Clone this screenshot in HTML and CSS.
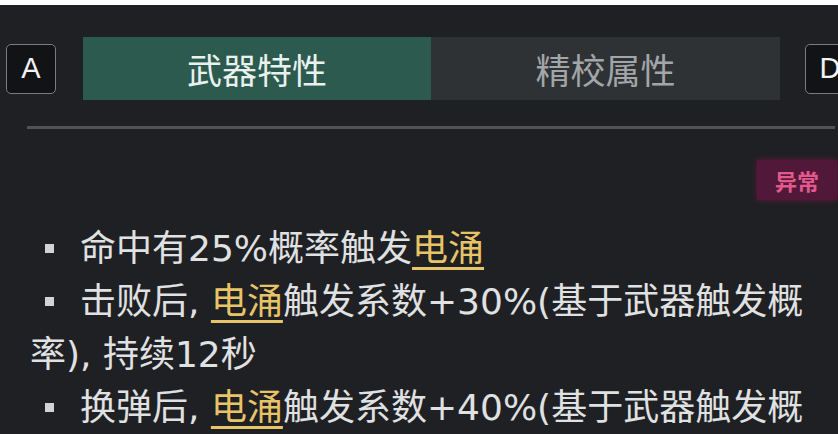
FILE: index.html
```html
<!DOCTYPE html>
<html lang="zh-CN">
<head>
    <meta charset="UTF-8">
    <meta name="viewport" content="width=device-width, initial-scale=1.0">
    <title>武器特性</title>
    <link rel="stylesheet" href="styles.css">
</head>
<body>
    <div class="panel">
        <div class="tab-row">
            <div class="key">A</div>
            <div class="tabs">
                <div class="tab active">武器特性</div>
                <div class="tab">精校属性</div>
            </div>
            <div class="key">D</div>
        </div>
        <div class="divider"></div>
        <div class="badge-row">
            <span class="badge">异常</span>
        </div>
        <div class="traits">
            <p class="trait"><span class="dot"></span>命中有25%概率触发<span class="link">电涌</span></p>
            <p class="trait"><span class="dot"></span>击败后, <span class="link">电涌</span>触发系数+30%(基于武器触发概率), 持续12秒</p>
            <p class="trait"><span class="dot"></span>换弹后, <span class="link">电涌</span>触发系数+40%(基于武器触发概率), 持续12秒</p>
        </div>
    </div>
</body>
</html>
```

FILE: styles.css
```css
body {
    margin: 0;
    padding: 0;
    background-color: #ffffff;
    font-family: "Noto Sans CJK SC", "Noto Sans", sans-serif;
    overflow: hidden;
}
.panel {
    margin-top: 5px;
    height: 429px;
    background-color: #1f2023;
    overflow: hidden;
}
.tab-row {
    display: flex;
    align-items: center;
    padding: 32px 0 0 6px;
    width: 900px;
}
.key {
    flex: none;
    width: 48px;
    height: 48px;
    border: 1px solid #7a7c7f;
    border-radius: 5px;
    background-color: #121315;
    color: #f2f2f2;
    font-family: "Liberation Sans", Arial, sans-serif;
    font-size: 29px;
    display: flex;
    align-items: center;
    justify-content: center;
}
.tabs {
    display: flex;
    margin: 0 25px 0 27px;
}
.tab {
    width: 348px;
    height: 63px;
    display: flex;
    align-items: center;
    justify-content: center;
    font-size: 35px;
    color: #a3a6a8;
    background-color: #2f3235;
}
.tab.active {
    background-color: #2d5a4f;
    color: #e9f1ee;
}
.tab + .tab {
    width: 349px;
}
.divider {
    height: 3px;
    margin: 26px 3px 0 27px;
    background-color: #505255;
}
.badge-row {
    display: flex;
    justify-content: flex-end;
    padding: 31px 1px 0 0;
}
.badge {
    width: 80px;
    height: 40px;
    display: flex;
    align-items: center;
    justify-content: center;
    font-size: 22px;
    font-weight: bold;
    color: #e3598c;
    background-color: #511839;
    box-shadow: 0 0 6px rgba(130, 20, 75, 0.7);
}
.traits {
    padding: 22px 0 0 30px;
    width: 786px;
}
.trait {
    margin: 0;
    font-family: "DejaVu Sans", "Noto Sans CJK SC", sans-serif;
    font-size: 36px;
    line-height: 53px;
    color: #e0e1e2;
}
.dot {
    display: inline-block;
    width: 9px;
    height: 9px;
    background-color: #d2d3d5;
    margin: 0 26px 0 15px;
    vertical-align: middle;
    position: relative;
    top: -3px;
}
.link {
    color: #e8c468;
    text-decoration: underline;
    text-decoration-thickness: 3px;
    text-underline-offset: 6px;
}
```
